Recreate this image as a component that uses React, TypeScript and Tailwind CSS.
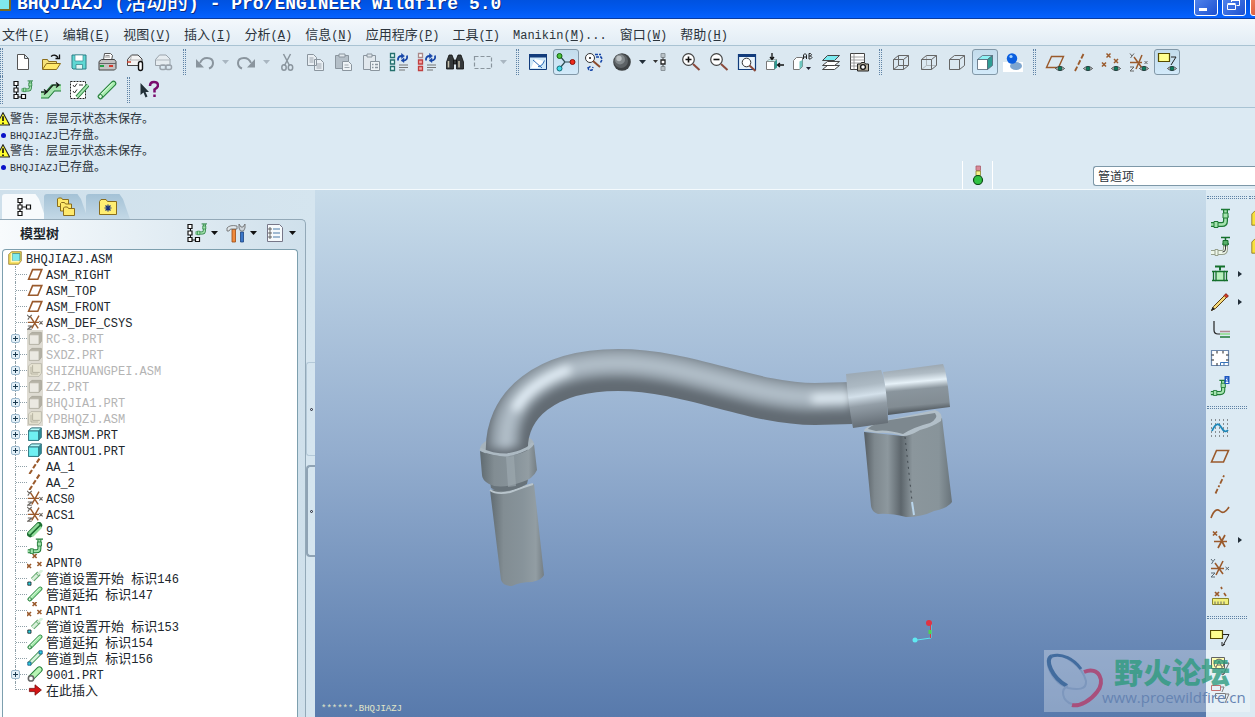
import { useState } from "react";
import type { ReactNode } from "react";

const BROWN = "#9a5a2c";
const EYE = (
  <g>
    <path d="M10.500 16.500q4.500-4 9 0q-4.500 4-9 0z" fill="#fff" stroke="#333" strokeWidth=".9" />
    <circle cx="15" cy="16.500" r="2.200" fill="#0f7a5a" stroke="#223" strokeWidth=".5" />
  </g>
);

const PIPE = (
  <g fill="none">
    <path d="M1 16.500h11q3.500 0 3.500-3.500V2" stroke="#1d7a35" strokeWidth="5" />
    <path d="M1 16.500h11q3.500 0 3.500-3.500V2" stroke="#a4e3ae" strokeWidth="2.500" />
    <path d="M11 1.500h9M13 8.500h5.500M5.500 13.500v6" stroke="#1d7a35" strokeWidth="1.500" />
    <path d="M13 5h5v5h-5zM4 13.500h4v6H4z" fill="#a4e3ae" stroke="#1d7a35" />
  </g>
);

const TREE_BOXES = (
  <g fill="#fff" stroke="#111">
    <path d="M3.500 3v14h7" fill="none" />
    <path d="M1 1.500h4v4H1zM1 8h4v4H1zM1 14.500h4v4H1zM8.500 14.500h4v4h-4z" strokeWidth="1.200" />
  </g>
);

const SYNC = (
  <g fill="none" stroke="#1746a8" strokeWidth="1.800">
    <path d="M9 8.500q-.5-4.500 4-4.500M18 3.500q1 5-4 5" />
    <path d="M12.500 1.500l3 2.500-3 2.500zM15 6l-3 2.500 3 2z" fill="#1746a8" strokeWidth=".5" />
  </g>
);

const LINES3 = <path d="M10 13h9M10 15.500h9M10 18h6" stroke="#777" />;

const ICONS: Record<string, ReactNode> = {
  newFile: <path d="M4.500 2.500h7l4 4v11h-11zM11.500 2.500v4h4" fill="#fff" stroke="#555" />,
  open: (
    <g>
      <path d="M1.500 17V7.500h5l1 2h8V12" fill="#f5e27a" stroke="#8a6d1c" />
      <path d="M1.500 17.500l4-6h14l-4 6z" fill="#ffe96b" stroke="#8a6d1c" />
      <path d="M10 4.500q4-3 7 1M18.500 2.500v4h-4" fill="none" stroke="#111" strokeWidth="1.300" />
    </g>
  ),
  save: (
    <g>
      <path d="M3 3h14v14H4l-1-1z" fill="#5fd8d4" stroke="#2d7d84" />
      <path d="M6 3h8v6H6z" fill="#fff" stroke="#3c8d92" strokeWidth=".7" />
      <path d="M7 12.500h6.500V17H7z" fill="#e4f5f4" stroke="#2d7d84" strokeWidth=".7" />
    </g>
  ),
  print: (
    <g>
      <path d="M6.500 8l1-6.500h6l2 2-1 5z" fill="#fff" stroke="#555" />
      <path d="M2 9.500l2.500-2h13l1.500 2v7l-1.500 1.500H2z" fill="#c3c3c3" stroke="#444" />
      <path d="M2 11.500h17" stroke="#666" />
      <path d="M8 5h5M8.500 3.500h4" stroke="#666" strokeWidth=".7" />
      <path d="M3 13h4v2H3z" fill="#24a148" />
      <path d="M12 13h4v2h-4z" fill="#d33a2c" />
    </g>
  ),
  mail: (
    <g>
      <path d="M2.500 13.500v-6l4-4.500h6.500l4 4v6.500z" fill="#f4f4f4" stroke="#444" />
      <path d="M3 8h13.500M6.500 3L5.500 8" stroke="#999" strokeWidth=".7" />
      <path d="M2 10h4" stroke="#c8402c" strokeWidth="1.500" />
      <rect x="13.500" y="9.500" width="4" height="9" rx="2" fill="#fff" stroke="#111" strokeWidth="1.400" />
    </g>
  ),
  mailLink: (
    <g stroke="#9aa3ab">
      <path d="M2.500 13.500v-6l4-4.500h6.500l4 4v6.500z" fill="#e6ecf0" />
      <path d="M3 8h13.500" strokeWidth=".7" />
      <rect x="7" y="13" width="6" height="4.500" rx="2" fill="none" strokeWidth="1.500" />
      <rect x="12.500" y="13" width="6" height="4.500" rx="2" fill="none" strokeWidth="1.500" />
    </g>
  ),
  undo: (
    <g>
      <path d="M5 11q2-5 7-5 6 0 6 5 0 4-4 5.500" fill="none" stroke="#8a959e" strokeWidth="2" />
      <path d="M1 7v8.500h8z" fill="#8a959e" />
    </g>
  ),
  redo: (
    <g>
      <path d="M15 11q-2-5-7-5-6 0-6 5 0 4 4 5.500" fill="none" stroke="#8a959e" strokeWidth="2" />
      <path d="M19 7v8.500h-8z" fill="#8a959e" />
    </g>
  ),
  cut: (
    <g fill="none" stroke="#8a959e" strokeWidth="1.500">
      <path d="M6.500 2l6 11.500M13.500 2l-6 11.500" />
      <ellipse cx="7" cy="15.500" rx="2.200" ry="2.800" />
      <ellipse cx="13.500" cy="15.500" rx="2.200" ry="2.800" />
    </g>
  ),
  copy: (
    <g fill="#e9eff4" stroke="#8a959e">
      <path d="M2.500 2.500h6l3 3v8h-9zM9.500 7.500h6l3 3v8h-9z" />
      <path d="M4.500 6h4M4.500 8h4M4.500 10h4M11.500 12h5M11.500 14h5M11.500 16h5" strokeWidth=".8" />
    </g>
  ),
  paste: (
    <g stroke="#8a959e">
      <path d="M2.500 3.500h13v13h-13z" fill="#b4bfc8" />
      <path d="M6 2h6v3H6z" fill="#e1e8ed" />
      <path d="M9.500 9.500h6l3 3v6h-9z" fill="#eef3f6" />
      <path d="M11.500 13h4M11.500 15.500h5" strokeWidth=".8" />
    </g>
  ),
  pasteSpecial: (
    <g stroke="#8a959e">
      <path d="M2.500 3.500h12v14h-12z" fill="#e1e8ed" />
      <path d="M6 2h5v3H6z" fill="#e1e8ed" />
      <path d="M9.500 9.500h9v9h-9z" fill="#eef3f6" />
      <path d="M11 12.500h1.500M14 12.500h3M11 15.500h1.500M14 15.500h3" strokeWidth="1.300" />
    </g>
  ),
  regen: (
    <g>
      <path d="M1.500 1.500h4v4h-4zM1.500 8h4v4h-4zM1.500 14.500h4v4h-4z" fill="#e6fbfa" stroke="#25706e" strokeWidth="1.300" />
      {SYNC}
      {LINES3}
    </g>
  ),
  regenRed: (
    <g>
      <path d="M1.500 1.500h4v4h-4z" fill="#fff" stroke="#a88" strokeWidth="1.300" />
      <path d="M1.500 8h4v4h-4zM1.500 14.500h4v4h-4z" fill="#f7a4a4" stroke="#c04040" strokeWidth="1.300" />
      {SYNC}
      {LINES3}
    </g>
  ),
  find: (
    <g fill="#34383a" stroke="#111" strokeWidth=".8">
      <path d="M4 3h3l1.500 4v10H1.500v-7zM16 3h-3l-1.500 4v10h7v-7zM8.500 8h3v4h-3z" />
      <path d="M3.500 9v6.500M14 9v6.500" stroke="#c6c0ac" strokeWidth="1.500" />
    </g>
  ),
  select: <path d="M1.500 4.500h17v12h-17z" fill="none" stroke="#8a959e" strokeDasharray="4 2" strokeWidth="1.200" />,
  repaint: (
    <g>
      <path d="M1.500 2.500h17v15h-17z" fill="#cfe8f8" stroke="#123c7c" />
      <path d="M1 2h18v3.500H1z" fill="#123c7c" />
      <path d="M3 16L7 7l9 2-6 7z" fill="#fff" />
      <path d="M10 14.500q4 .5 6.500-6M5 8l9 8" fill="none" stroke="#2b6bb8" />
    </g>
  ),
  spin: (
    <g>
      <path d="M4 4l5 6-5 6M9 10h8" fill="none" stroke="#2a4a50" strokeWidth="1.200" />
      <circle cx="3.500" cy="4" r="2.500" fill="#4cc43c" stroke="#14600f" />
      <circle cx="3.500" cy="16.500" r="2.500" fill="#43dbe8" stroke="#116b78" />
      <circle cx="16.500" cy="10" r="2.500" fill="#ee2b1c" stroke="#8a120a" />
    </g>
  ),
  orient: (
    <g fill="none">
      <circle cx="6" cy="6" r="4.500" fill="#fff" stroke="#333" />
      <circle cx="6" cy="6" r="1" fill="#111" />
      <path d="M9 9l7 6" stroke="#8b4a2b" strokeWidth="2" />
      <path d="M11 2.500h6M12 5h5q2 3-1 6M4 15q0 4 4 3l1-3M4 16l3-2" stroke="#1746a8" strokeDasharray="3 1" strokeWidth="1.500" />
    </g>
  ),
  sphere: (
    <g>
      <circle cx="10" cy="10" r="8.800" fill="#3e4244" />
      <circle cx="9" cy="9" r="7" fill="#5d6265" />
      <circle cx="8" cy="7.500" r="5" fill="#83898c" />
      <circle cx="7" cy="6.500" r="2.700" fill="#babfc1" />
    </g>
  ),
  explode: (
    <g>
      <path d="M0 8h5l-2.500 3z" fill="#333" />
      <path d="M8 1.500h4v4H8zM8 14.500h4v4H8z" fill="#b9c1c6" stroke="#8b959b" />
      <path d="M8 8h4v4H8z" fill="#fff" stroke="#222" strokeWidth="1.300" />
      <path d="M10 5.500V8M10 12v2.500" stroke="#444" />
    </g>
  ),
  zoomIn: (
    <g fill="none">
      <circle cx="7.500" cy="7.500" r="5.800" fill="#fff" stroke="#444" strokeWidth="1.200" />
      <path d="M4.500 7.500h6M7.500 4.500v6" stroke="#111" strokeWidth="1.600" />
      <path d="M12 12l6.500 6" stroke="#8b4a3b" strokeWidth="2" />
    </g>
  ),
  zoomOut: (
    <g fill="none">
      <circle cx="7.500" cy="7.500" r="5.800" fill="#fff" stroke="#444" strokeWidth="1.200" />
      <path d="M4.500 7.500h6" stroke="#111" strokeWidth="1.600" />
      <path d="M12 12l6.500 6" stroke="#8b4a3b" strokeWidth="2" />
    </g>
  ),
  refit: (
    <g>
      <path d="M1.500 2.500h17v15h-17z" fill="#e8f3fb" stroke="#123c7c" strokeWidth="1.200" />
      <path d="M1 2h18v3H1z" fill="#123c7c" />
      <circle cx="9.500" cy="10.500" r="4.300" fill="#fff" stroke="#333" />
      <path d="M12.500 13.500l6 5.500" stroke="#8b4a3b" strokeWidth="2" />
    </g>
  ),
  reorient: (
    <g>
      <path d="M1.500 9.500h8v8h-8z" fill="#fff" stroke="#777" />
      <path d="M9.500 9.500l2.500-2v8l-2.500 2z" fill="#2f9d94" />
      <path d="M1.500 9.500L4 7.500h8l-2.500 2z" fill="#c5efee" stroke="#777" strokeWidth=".5" />
      <path d="M7 1v6M5 5l2 2.500L9 5M19 13h-6M15 11l-2.500 2 2.500 2" fill="none" stroke="#111" strokeWidth="1.300" />
    </g>
  ),
  saved: (
    <g>
      <path d="M.5 8.500l3-3h6v9l-3 3h-6z" fill="#fff" stroke="#777" />
      <path d="M9.500 8v6l-3 3.500v-8z" fill="#6cc5c0" />
      <path d="M10.500 7V3q1.500-3 3 0v4M10.500 5h3M16 1.500V7h1.500q3-1.500 0-3 2-1.500 0-2.500zM16 4h1.500" fill="none" stroke="#222" />
      <path d="M13 15h5l-2.500 3z" fill="#223" />
    </g>
  ),
  layers: (
    <g stroke="#444">
      <path d="M1.500 17.500l5-4h12l-5 4z" fill="#fff" />
      <path d="M1.500 13.500l5-4h12l-5 4z" fill="#fff" />
      <path d="M1.500 8.500l5-5h12l-5 5z" fill="#7ceaf0" />
    </g>
  ),
  viewMgr: (
    <g>
      <path d="M1.500 1.500h14v16h-14z" fill="#fff" stroke="#444" />
      <path d="M1.500 5h14M1.500 8h14M1.500 11h14M1.500 14h14M5 1.500v16" stroke="#888" strokeWidth=".8" />
      <path d="M8.500 12h3l1-1.500h3l1 1.500h3v7h-11z" fill="#b9b2a0" stroke="#222" />
      <circle cx="14" cy="15" r="2.400" fill="#fff" stroke="#111" strokeWidth="1.300" />
    </g>
  ),
  wireframe: (
    <g fill="none" stroke="#666">
      <path d="M2.500 7.500h10v10h-10zM7.500 3.500h10v10h-10zM2.500 7.500l5-4M12.500 7.500l5-4M2.500 17.500l5-4M12.500 17.500l5-4" />
    </g>
  ),
  hiddenLine: (
    <g fill="none" stroke="#666">
      <path d="M7.500 3.500v10h10M2.500 17.500l5-4" stroke="#b0b7bc" />
      <path d="M2.500 7.500h10v10h-10zM2.500 7.500l5-4h10l-5 4M17.500 3.500v10l-5 4" />
    </g>
  ),
  noHidden: (
    <g fill="none" stroke="#666">
      <path d="M2.500 7.500h10v10h-10zM2.500 7.500l5-4h10l-5 4M17.500 3.500v10l-5 4" />
    </g>
  ),
  shaded: (
    <g stroke="#567" strokeWidth=".8">
      <path d="M2.500 7.500h10v10h-10z" fill="#fff" />
      <path d="M2.500 7.500l5-4h10l-5 4z" fill="#8ef1f4" />
      <path d="M12.500 7.500l5-4v10l-5 4z" fill="#2f9d94" />
    </g>
  ),
  realtime: (
    <g>
      <path d="M0 10h20v10H0z" fill="#fff" />
      <ellipse cx="13" cy="14" rx="6" ry="4" fill="#7ea6cf" />
      <circle cx="9" cy="6.500" r="5.200" fill="#0b5fe0" />
      <circle cx="8" cy="4.500" r="1.600" fill="#a5d4ff" />
    </g>
  ),
  planeEye: (
    <g>
      <path d="M1.500 15.500l5-11h12l-5 11z" fill="none" stroke={BROWN} strokeWidth="1.400" />
      {EYE}
    </g>
  ),
  axisEye: (
    <g>
      <path d="M2 19L11 1" stroke={BROWN} strokeWidth="1.800" strokeDasharray="5 2" />
      {EYE}
    </g>
  ),
  pointEye: (
    <g>
      <path d="M5.500 1.500l4 4m0-4l-4 4M1 10.500l4 4m0-4l-4 4M13 7l4 4m0-4l-4 4" stroke={BROWN} strokeWidth="1.500" />
      {EYE}
    </g>
  ),
  csysEye: (
    <g>
      <path d="M1 10.500h12M5 5l8 11M13 3L7 17" stroke={BROWN} strokeWidth="1.500" />
      <path d="M1 1.500l2 2.500 2-2.500M3 4L1.500 6M1 15h4l-4 4h4M15.500 9l3 3m0-3l-3 3" fill="none" stroke="#666" />
      {EYE}
    </g>
  ),
  noteEye: (
    <g>
      <path d="M1.500 1.500h11v8h-11z" fill="#ffff8e" stroke="#554a00" strokeWidth="1.200" />
      <path d="M14 5h5l-5 8" fill="none" stroke="#222" />
      {EYE}
    </g>
  ),
  treePipe: (
    <g>
      {TREE_BOXES}
      <g transform="translate(8 0) scale(.6)">{PIPE}</g>
    </g>
  ),
  route: (
    <g fill="none">
      <path d="M0 15h6l6-7h8" stroke="#1d7a35" strokeWidth="7" />
      <path d="M0 15h6l6-7h8" stroke="#a4e3ae" strokeWidth="5" />
      <path d="M0 12h6l6-7h6M3 9.500L6 12l-3 2.500M15 2.500L18 5l-3 2.500" stroke="#111" strokeWidth="1.200" />
    </g>
  ),
  spec: (
    <g fill="none">
      <path d="M1.500 1.500h15v17h-15z" fill="#fff" stroke="#222" strokeDasharray="2 1" />
      <path d="M4 5l1.500 2L8 3.500M4 11l1.500 2L8 9.500M10 5h4" stroke="#333" />
      <path d="M8 17l11-12" stroke="#1d7a35" strokeWidth="4" />
      <path d="M8 17l11-12" stroke="#a4e3ae" strokeWidth="2" />
    </g>
  ),
  rod: (
    <g strokeLinecap="round">
      <path d="M3.500 16.500l13-13" stroke="#23803a" strokeWidth="5.500" />
      <path d="M3.500 16.500l13-13" stroke="#a7ecae" strokeWidth="3.500" />
      <path d="M3.500 15l11.500-11.500" stroke="#eaffea" strokeWidth="1" />
      <circle cx="3.500" cy="16.500" r="2" fill="#dff5df" stroke="#23803a" />
    </g>
  ),
  whatsThis: (
    <g>
      <path d="M1.500 3v12l3-2.500 2 5 2-1-2-4.500H10z" fill="#223038" />
      <path d="M11 6q0-4 4-4t4 3.500q0 2-3.500 4v3M15.500 14.500v2.500" fill="none" stroke="#7a0c6e" strokeWidth="2.500" />
    </g>
  ),
  pipe: PIPE,
  flexPipe: (
    <g fill="none">
      <path d="M1 16.500h11q3.500 0 3.500-3.500V9" stroke="#96a08c" strokeWidth="5" />
      <path d="M1 16.500h11q3.500 0 3.500-3.500V9" stroke="#eef7ea" strokeWidth="3" />
      <path d="M11 1.500h9M15.500 1v10M12.500 8h6.500" stroke="#14702c" strokeWidth="1.500" />
      <path d="M13 4.500h5V9h-5z" fill="#58b06a" stroke="#14702c" />
      <path d="M15.500 9v4q0 3-3 3" stroke="#333" />
      <path d="M5 13.500h3v6H5z" fill="#eef7ea" stroke="#96a08c" />
    </g>
  ),
  valve: (
    <g stroke="#14702c" strokeWidth="1.300">
      <path d="M5 2.500h10M10 2.500v4" strokeWidth="2" />
      <path d="M6 7.500h8v9H6z" fill="#b9f0bd" />
      <path d="M3.500 7v10M16.500 7v10M2 7.500h4M2 16.500h4M14 7.500h4M14 16.500h4" fill="none" />
    </g>
  ),
  pencil: (
    <g>
      <path d="M1.500 18.500l2-4L16 2l2 2L5.500 16.500z" fill="#f5d97a" stroke="#5a3d10" />
      <path d="M16 1.500l2.500 2.500-2 2L14 3.500z" fill="#d23c28" stroke="#6a1a10" strokeWidth=".6" />
      <path d="M1 19l1.500-4L5 17z" fill="#222" />
    </g>
  ),
  bend: (
    <g fill="none">
      <path d="M4 1v9q0 4 4 4h2" stroke="#222" strokeWidth="1.200" />
      <path d="M10 11.500h10" stroke="#b08a92" strokeWidth="1.500" />
      <path d="M10 14h10" stroke="#9fe0a4" strokeWidth="2" />
      <path d="M10 17h10" stroke="#1d7a35" strokeWidth="1.500" />
    </g>
  ),
  sheet: (
    <g fill="none">
      <path d="M1.500 2.500h17v15h-17z" fill="#fff" stroke="#6a87ad" strokeWidth="1.200" />
      <path d="M7 3v2.500M13 3v2.500M1.500 7H4M1.500 12H4M18.500 7H16M18.500 12H16M7 17.500V15" stroke="#222" />
      <path d="M10.500 14.500h8M10.500 14.500v3M14 14.500v3" stroke="#3673b8" />
    </g>
  ),
  pipeInfo: (
    <g>
      <g transform="translate(0 3) scale(.85)">{PIPE}</g>
      <path d="M14.500 0h5v8h-5z" fill="#1c56c0" />
      <path d="M17 1.500v1M16 3.500h1v3M15.800 6.500h2.500" stroke="#fff" fill="none" />
    </g>
  ),
  sketch: (
    <g fill="none">
      <path d="M1 2h19M1 6h19M1 10h19M1 14h19M1 18h19" stroke="#333" strokeDasharray="1 3" />
      <path d="M2 13q5-11 9-4t7 3" stroke="#1c86b8" strokeWidth="1.800" />
    </g>
  ),
  plane: <path d="M1.500 16l5-11.500h12l-5 11.500z" fill="none" stroke={BROWN} strokeWidth="1.600" />,
  planeItem: <path d="M2 16.500L7 4.500h11.500l-5 12z" fill="none" stroke={BROWN} strokeWidth="2" />,
  axis: <path d="M5.500 19.500L14.500.5" stroke={BROWN} strokeWidth="1.800" strokeDasharray="5 2 2 2" />,
  axisItem: <path d="M3 20L16 0" stroke={BROWN} strokeWidth="2.600" strokeDasharray="6 2.500" />,
  curve: <path d="M1 16q4-11 9-7 4 4 9-4" fill="none" stroke={BROWN} strokeWidth="1.600" />,
  pointCsys: (
    <g stroke={BROWN} strokeWidth="1.700">
      <path d="M3 1.500l4 4m0-4l-4 4M4 11.500h13M9 6l6 11M15 5L8 18" />
    </g>
  ),
  csys: (
    <g fill="none">
      <path d="M1 10.500h13M5 5l8 11M13 3L6 17" stroke={BROWN} strokeWidth="1.600" />
      <path d="M1 1l2 2.500L5 1M3 3.500L1.500 6M1 15h4l-4 4h4M15.500 9l3.500 3m0-3l-3.500 3" stroke="#5c6a74" />
    </g>
  ),
  csysItem: (
    <g fill="none">
      <path d="M1 10.500h14M4 3l10 15M15 2L6 18" stroke={BROWN} strokeWidth="1.800" />
      <path d="M0 1l3 3 3-3M3 4L1 7M1 15h5l-5 4h5M15.500 9l4 4m0-4l-4 4" stroke="#6b6660" strokeWidth="1.400" />
    </g>
  ),
  points: <path d="M7 0l5 5m0-5l-5 5M0 12.500l5 5m0-5l-5 5M13 10l5 5m0-5l-5 5" stroke={BROWN} strokeWidth="2" />,
  analysis: (
    <g fill="none">
      <path d="M5 6l4 4m0-4l-4 4M11 1l1 2M14 7l2 3" stroke={BROWN} strokeWidth="1.700" />
      <path d="M2.500 12.500h16v6h-16z" fill="#f1f07c" stroke="#8a862c" />
      <path d="M5 18.500v-3M8 18.500v-3M11 18.500v-3M14 18.500v-3" stroke="#666" />
    </g>
  ),
  note: (
    <g>
      <path d="M.5 2.500h12v8h-12z" fill="#ffff8e" stroke="#554a00" strokeWidth="1.200" />
      <path d="M13 6.500h6l-6 11M12 14v4l3-2" fill="none" stroke="#222" />
    </g>
  ),
  balloon: (
    <g fill="none" stroke="#222">
      <path d="M1.500 1.500h13v11h-13z" fill="#ffff8e" />
      <circle cx="9" cy="8" r="4.800" />
      <path d="M6 11l3-6 3 6M7 9h4M14 7h5l-6 12M12 15v4l3-2" />
    </g>
  ),
  noteStack: (
    <g fill="none" stroke="#444">
      <path d="M1.500 1.500h9v5h-9z" stroke="#a33" />
      <path d="M5.500 9.500h10v5h-10zM11 3h3l-2 5M16 10h3l-4 9" />
    </g>
  ),
  tree: (
    <g fill="#fff" stroke="#111" strokeWidth="1.200">
      <path d="M6 5v10M6 10h8" />
      <path d="M4 1.500h4v4H4zM4 8h4v4H4zM4 14.500h4v4H4zM12.500 8h4v4h-4z" />
    </g>
  ),
  folders: (
    <g fill="#ffe96b" stroke="#8a6d1c">
      <path d="M1.500 9.500V2l1-1h3l1 1.500h6v7z" />
      <path d="M4.500 14V6.500l1-1h3l1 1.500h6v7z" />
      <path d="M7.500 18.500V11l1-1h3l1 1.500h6v7z" />
    </g>
  ),
  favorites: (
    <g>
      <path d="M1.500 17.500V4.500l1.500-2h5l1.500 2h9v13z" fill="#ffee72" stroke="#8a6d1c" />
      <path d="M10 7.500v7M6.500 11h7M7.500 8.500l5 5M12.500 8.500l-5 5" stroke="#17307c" strokeWidth="1.200" />
    </g>
  ),
  tools: (
    <g>
      <path d="M6 6h3.500v13H6z" fill="#f08a3c" stroke="#9b4a12" strokeWidth=".8" />
      <path d="M1 5q3-3.500 10-2v3H4.500L3 8H1z" fill="#dfe6ea" stroke="#666" strokeWidth=".8" />
      <path d="M14.500 9h3v10h-3z" fill="#3a76c8" stroke="#1a4280" strokeWidth=".8" />
      <path d="M13 1v4l1.500 3h3L19 5V1l-2 3h-2z" fill="#ccd4da" stroke="#666" strokeWidth=".8" />
    </g>
  ),
  settings: (
    <g>
      <path d="M2.500 1.500h12l3 3v14h-15z" fill="#f6fafc" stroke="#778" />
      <path d="M8 6h7M8 10h7M8 14h7" stroke="#4b7ba8" />
      <path d="M4 5h2v2H4zM4 9h2v2H4zM4 13h2v2H4z" fill="#fff" stroke="#444" strokeWidth=".8" />
    </g>
  ),
  assembly: (
    <g>
      <path d="M1 5l4-4h14v13l-4 5H1z" fill="#f3dd58" stroke="#86691a" />
      <path d="M6 3.500h11v9l-2 2H6z" fill="#7fe9ec" stroke="#2d7d84" />
      <path d="M5 3v12h11" fill="none" stroke="#fff8b8" strokeWidth="2" />
    </g>
  ),
  component: <path d="M1 5l4-4h14v13l-4 5H1z" fill="#f8e23c" stroke="#86691a" />,
  part: (
    <g>
      <path d="M2 6l3.500-3.500H18V14l-3.500 4H2z" fill="#2f8d98" stroke="#2b6b76" />
      <path d="M2 6h12.500v12H2z" fill="#6ff0f2" stroke="#2b6b76" />
      <path d="M2 6l3.500-3.500H18L14.500 6z" fill="#b5fafa" stroke="#2b6b76" />
    </g>
  ),
  partOff: (
    <g>
      <path d="M0 0h20v20H0z" fill="#dedbd2" />
      <path d="M3 6l3-3h12v11l-3 4H3z" fill="#b5b2a6" stroke="#a5a296" />
      <path d="M3 6h12v12H3z" fill="#ebe9e2" stroke="#b5b2a6" />
    </g>
  ),
  assemblyOff: (
    <g>
      <path d="M0 0h20v20H0z" fill="#dedbd2" />
      <path d="M2 5l3-3h13v12l-3 4H2z" fill="#e6e3d2" stroke="#b5b2a6" />
      <path d="M7 4v9h9M5 6v9h9" fill="none" stroke="#aaa796" />
    </g>
  ),
  bundle: (
    <g strokeLinecap="round">
      <path d="M4 15L15 4" stroke="#1d6f32" strokeWidth="8" />
      <path d="M3 14L14 3M7 17L17 7" stroke="#8fdc9a" strokeWidth="3" />
      <path d="M5 16L16 5" stroke="#1d6f32" />
    </g>
  ),
  pipeStart: (
    <g>
      <path d="M7 12l8-8" stroke="#64a86e" strokeWidth="6" />
      <path d="M7 12l12-12" stroke="#d8f0da" strokeWidth="3.500" strokeDasharray="8 1 2 1" />
      <path d="M1 15h4v4H1z" fill="#2fd5e6" stroke="#111" />
    </g>
  ),
  pipeToPoint: (
    <g>
      <path d="M3.500 16.500l13-13" stroke="#23803a" strokeWidth="5.500" />
      <path d="M3.500 16.500l13-13" stroke="#d4f4dc" strokeWidth="3.500" />
      <path d="M1 15h4v4H1zM15 1h4v4h-4z" fill="#2fd5e6" stroke="#114a78" />
    </g>
  ),
  pipePart: (
    <g strokeLinecap="round">
      <path d="M5.500 14.500l10-10" stroke="#23803a" strokeWidth="8" />
      <path d="M5.500 14.500l10-10" stroke="#b9f5b4" strokeWidth="5.500" />
      <circle cx="5" cy="15.500" r="3.300" fill="#fff" stroke="#666" strokeWidth="2" />
    </g>
  ),
  insertHere: <path d="M3 8h7V3.500l8 6.500-8 6.500V12H3z" fill="#d41414" stroke="#7a0a0a" />,
  warning: (
    <g>
      <path d="M10 1l9.500 17.500H.5z" fill="#ffff2e" stroke="#222" strokeWidth="1.500" />
      <path d="M10 6v7M10 15v2" stroke="#111" strokeWidth="2.400" />
    </g>
  ),
  statusLight: (
    <g>
      <path d="M8 1h4.500v4.500H8z" fill="#d98a98" stroke="#a85a68" strokeWidth=".8" />
      <path d="M8 6h4.500v4.500H8z" fill="#f5f08a" stroke="#8a862c" strokeWidth=".8" />
      <circle cx="10" cy="15" r="4.500" fill="#2fc244" stroke="#0d4a18" strokeWidth="1.200" />
    </g>
  ),
};

function Icon({ name, className = "h-5 w-5" }: { name: string; className?: string }) {
  return (
    <svg viewBox="0 0 20 20" className={`${className} shrink-0`} aria-hidden="true">
      {ICONS[name]}
    </svg>
  );
}

// Latin characters are set in a monospaced face, Chinese ones in Noto CJK
function Label({ text, small = false }: { text: string; small?: boolean }) {
  return (
    <span className="whitespace-pre">
      {text.split(/([^\x00-\x7f]+)/).map((part, i) => (
        <span
          key={i}
          className={
            i % 2
              ? small
                ? "font-['Noto_Sans_CJK_SC',sans-serif] text-[12px]"
                : "font-['Noto_Sans_CJK_SC',sans-serif] text-[13px]"
              : small
                ? "font-['Liberation_Mono',monospace] text-[10px]"
                : "font-['Liberation_Mono',monospace] text-[12px]"
          }
        >
          {part}
        </span>
      ))}
    </span>
  );
}

const MENUS = [
  ["文件", "F"],
  ["编辑", "E"],
  ["视图", "V"],
  ["插入", "I"],
  ["分析", "A"],
  ["信息", "N"],
  ["应用程序", "P"],
  ["工具", "T"],
  ["Manikin", "M"],
  ["窗口", "W"],
  ["帮助", "H"],
];

const ROW_ONE =
  "newFile open save print mail mailLink | undo ~ redo ~ cut copy paste pasteSpecial regen regenRed find select ~ | repaint spin* orient sphere v explode zoomIn zoomOut refit reorient saved layers viewMgr | wireframe hiddenLine noHidden shaded* realtime | planeEye axisEye pointEye csysEye noteEye*";
const ROW_TWO = "treePipe route spec rod | whatsThis";

const SIDE_GROUPS = [
  ["pipe", "flexPipe", "valve>", "pencil>", "bend", "sheet", "pipeInfo"],
  ["sketch", "plane", "axis", "curve", "pointCsys>", "csys", "analysis"],
  ["note", "balloon", "noteStack"],
];

const TREE: { icon: string; text: string; plus?: boolean; off?: boolean }[] = [
  { icon: "planeItem", text: "ASM_RIGHT" },
  { icon: "planeItem", text: "ASM_TOP" },
  { icon: "planeItem", text: "ASM_FRONT" },
  { icon: "csysItem", text: "ASM_DEF_CSYS" },
  { icon: "partOff", text: "RC-3.PRT", plus: true, off: true },
  { icon: "partOff", text: "SXDZ.PRT", plus: true, off: true },
  { icon: "assemblyOff", text: "SHIZHUANGPEI.ASM", plus: true, off: true },
  { icon: "partOff", text: "ZZ.PRT", plus: true, off: true },
  { icon: "partOff", text: "BHQJIA1.PRT", plus: true, off: true },
  { icon: "assemblyOff", text: "YPBHQZJ.ASM", plus: true, off: true },
  { icon: "part", text: "KBJMSM.PRT", plus: true },
  { icon: "part", text: "GANTOU1.PRT", plus: true },
  { icon: "axisItem", text: "AA_1" },
  { icon: "axisItem", text: "AA_2" },
  { icon: "csysItem", text: "ACS0" },
  { icon: "csysItem", text: "ACS1" },
  { icon: "bundle", text: "9" },
  { icon: "pipe", text: "9" },
  { icon: "points", text: "APNT0" },
  { icon: "pipeStart", text: "管道设置开始 标识146" },
  { icon: "rod", text: "管道延拓 标识147" },
  { icon: "points", text: "APNT1" },
  { icon: "pipeStart", text: "管道设置开始 标识153" },
  { icon: "rod", text: "管道延拓 标识154" },
  { icon: "pipeToPoint", text: "管道到点 标识156" },
  { icon: "pipePart", text: "9001.PRT", plus: true },
  { icon: "insertHere", text: "在此插入" },
];

function Caret({ className = "fill-[#222e38]" }: { className?: string }) {
  return (
    <svg viewBox="0 0 7 4" className={`h-1 w-[7px] shrink-0 ${className}`} aria-hidden="true">
      <path d="M0 0h7L3.500 4z" />
    </svg>
  );
}

function Grip() {
  return (
    <span className="flex h-7 w-3.5 shrink-0 items-center justify-center">
      <span className="h-[26px] w-[3px] border-x border-dotted border-[#5f83a6]" />
    </span>
  );
}

function ToolRow({ items }: { items: string }) {
  return (
    <div className="flex h-7 items-center">
      <span className="mr-1.5 h-7 w-[3px] border-x border-dotted border-[#5f83a6]" />
      {items.split(" ").map((item, i) => {
        if (item === "|") return <Grip key={i} />;
        if (item === "~" || item === "v")
          return (
            <button key={i} aria-label="更多" className="flex h-7 w-[13px] items-center justify-center">
              <Caret className={item === "v" ? "fill-[#222e38]" : "fill-[#a9b6c1]"} />
            </button>
          );
        const active = item.endsWith("*");
        const name = item.replace("*", "");
        return (
          <button
            key={i}
            aria-label={name}
            className={
              active
                ? "mx-px flex h-[26px] w-[26px] shrink-0 items-center justify-center rounded-[3px] border border-[#8298a8] bg-linear-to-b from-[#c3dcec] to-[#d3eafa]"
                : "flex h-7 w-7 shrink-0 items-center justify-center"
            }
          >
            <Icon name={name} />
          </button>
        );
      })}
    </div>
  );
}

function Toolbars() {
  return (
    <div className="border-b border-[#a9c3d3] bg-[#dbe8f1] pt-0.5 pb-[3px]">
      <ToolRow items={ROW_ONE} />
      <ToolRow items={ROW_TWO} />
    </div>
  );
}

function TitleBar() {
  return (
    <header className="h-[19px] shrink-0 overflow-hidden border-b border-[#0a3ca0] bg-linear-to-b from-[#0052e0] via-[#0058ee] to-[#0662ff]">
      <div className="-mt-[11px] flex h-[30px] items-center justify-between">
        <div className="flex items-center gap-1.5">
          <span className="h-3.5 w-[11px] border-2 border-l-0 border-[#7a6a20] bg-[#7fe9ec]" />
          <h1 className="font-['Liberation_Mono','Noto_Sans_CJK_SC',monospace] text-[18px] leading-[30px] font-bold whitespace-nowrap text-white [text-shadow:1px_1px_#0a2a80]">
            BHQJIAZJ (<span className="text-[21px] font-medium">活动的</span>) - Pro/ENGINEER Wildfire 5.0
          </h1>
        </div>
        <div className="-mr-[19px] flex gap-1">
          <button
            aria-label="最小化"
            className="flex h-6 w-6 items-end rounded-[3px] border border-white bg-linear-to-br from-[#5a8cf0] to-[#1c4fd0] p-1"
          >
            <span className="h-[3px] w-2 bg-white" />
          </button>
          <button
            aria-label="还原"
            className="flex h-6 w-6 items-end rounded-[3px] border border-white bg-linear-to-br from-[#5a8cf0] to-[#1c4fd0] p-1"
          >
            <svg viewBox="0 0 14 12" className="h-3 w-3.5 fill-none stroke-white">
              <path d="M.5 5.500h8v5h-8zM.5 4.500h8M4.500 3V.5h8v6h-3M4.500 1.500h8" />
            </svg>
          </button>
          <button
            aria-label="关闭"
            className="h-6 w-6 rounded-[3px] border border-white bg-linear-to-br from-[#f08a6a] to-[#d0401c]"
          />
        </div>
      </div>
    </header>
  );
}

function MenuBar() {
  return (
    <nav className="flex h-[27px] shrink-0 items-center gap-[13px] border-b border-[#a9c3d3] bg-linear-to-b from-[#f4f8fc] to-[#e2edf5] pt-1 pl-0.5 text-[#2c343c]">
      {MENUS.map(([name, key]) => (
        <button key={key} className="whitespace-nowrap leading-4">
          <Label text={name} />
          <span className="font-['Liberation_Mono',monospace] text-[12px]">
            (<u>{key}</u>){key === "M" && "..."}
          </span>
        </button>
      ))}
    </nav>
  );
}

function Messages() {
  return (
    <section className="flex h-[82px] shrink-0 items-start justify-between border-b border-[#f4fafd] bg-[#dceaf3] text-[#2c343c]">
      <ul className="pt-[3px]">
        {[0, 1, 2, 3].map((i) => (
          <li key={i} className="flex h-4 items-center leading-4">
            {i % 2 ? (
              <span className="mr-1 ml-px h-[5px] w-[5px] rounded-full bg-[#0a12c8]" />
            ) : (
              <Icon name="warning" className="-ml-1 h-3.5 w-3.5" />
            )}
            <Label small text={i % 2 ? "BHQJIAZJ已存盘。" : "警告: 层显示状态未保存。"} />
          </li>
        ))}
      </ul>
      <div className="flex items-end self-end">
        <div className="mr-[100px] flex h-7 w-[31px] items-center justify-center border-x border-white">
          <Icon name="statusLight" />
        </div>
        <select
          aria-label="过滤器"
          className="mb-[3px] h-5 w-[162px] appearance-none rounded-l-[3px] border border-r-0 border-[#7d98a8] bg-white pl-1 font-['Noto_Sans_CJK_SC',sans-serif] text-[12px] leading-4"
        >
          <option>管道项</option>
        </select>
      </div>
    </section>
  );
}

function ModelTree() {
  return (
    <div className="mr-[7px] ml-0.5 min-h-0 flex-1 overflow-hidden rounded-t-[4px] border border-b-0 border-[#7d9fae] bg-white leading-4 text-[#20262c]">
      <div className="flex h-4 items-center gap-1 pl-[5px]">
        <Icon name="assembly" className="h-3.5 w-3.5" />
        <Label text="BHQJIAZJ.ASM" />
      </div>
      <ul>
        {TREE.map((row, i) => (
          <li key={i} className="flex h-4 items-center">
            <span
              className={`ml-3 flex w-3 items-center border-l border-dotted border-[#8fa0a8] ${
                i === TREE.length - 1 ? "h-2 self-start" : "h-4"
              }`}
            >
              {row.plus && (
                <button
                  aria-label="展开"
                  className="-ml-[5px] flex h-[9px] w-[9px] shrink-0 items-center justify-center rounded-[2px] border border-[#9bb8cc] bg-[#e3f0f8]"
                >
                  <svg viewBox="0 0 5 5" className="h-[5px] w-[5px] stroke-[#1a3a50]">
                    <path d="M0 2.500h5M2.500 0v5" />
                  </svg>
                </button>
              )}
              <span
                className={`flex-1 border-t border-dotted border-[#8fa0a8] ${i === TREE.length - 1 ? "self-end" : ""}`}
              />
            </span>
            <Icon name={row.icon} className="mr-[3px] h-4 w-4" />
            <span className={row.off ? "text-[#b4b4b4]" : ""}>
              <Label text={row.text} />
            </span>
          </li>
        ))}
      </ul>
    </div>
  );
}

function LeftPanel() {
  const [tab, setTab] = useState(0);

  return (
    <aside className="flex w-[315px] shrink-0 bg-linear-to-r from-[#cfe0eb] to-[#d5e5ef]">
      <div className="flex w-[306px] flex-col">
        <div className="flex h-[29px] items-end pl-0.5">
          {["tree", "folders", "favorites"].map((name, i) => (
            <button
              key={name}
              aria-label={name}
              onClick={() => setTab(i)}
              className={`-mr-0.5 flex h-[25px] w-11 items-center justify-center rounded-tl-[3px] [clip-path:polygon(0_0,76%_0,84%_20%,100%_100%,0_100%)] ${
                tab === i ? "bg-[#f7fafc]" : "bg-linear-to-b from-[#a4c2d6] to-[#c3d8e6]"
              }`}
            >
              <Icon name={name} />
            </button>
          ))}
        </div>
        <div className="flex min-h-0 flex-1 flex-col rounded-tr-[5px] border-t border-r border-[#93a9b8] bg-linear-to-r from-[#f8fbfd] to-[#cfe0eb]">
          <div className="flex h-[29px] shrink-0 items-center justify-between pr-[9px] pb-1 pl-5">
            <h2 className="font-['Noto_Sans_CJK_SC',sans-serif] text-[13px] leading-4 font-bold text-[#20262c]">模型树</h2>
            <div className="flex gap-2">
              {["treePipe", "tools", "settings"].map((name) => (
                <button key={name} aria-label={name} className="flex items-center gap-1">
                  <Icon name={name} />
                  <Caret className="fill-[#111]" />
                </button>
              ))}
            </div>
          </div>
          <ModelTree />
        </div>
      </div>
      <div className="flex flex-1 flex-col pt-[172px]">
        <div className="flex h-[94px] items-center justify-center rounded-l-[3px] border border-r-0 border-[#b4c9d8]">
          <span className="h-[3px] w-[3px] rounded-full border border-[#223]" />
        </div>
        <div className="mt-[9px] flex h-[92px] items-center justify-center rounded-l-[4px] border-2 border-r-0 border-[#8fa3b4]">
          <span className="h-[3px] w-[3px] rounded-full border border-[#223]" />
        </div>
      </div>
    </aside>
  );
}

const TUBE = "M507 456C503 403 548 370 618 370C690 370 750 404 815 404L852 403";

function PipeModel() {
  return (
    <svg viewBox="315 190 891 527" className="h-full w-full" role="img" aria-label="BHQJIAZJ">
      <defs>
        <linearGradient id="pipe" x1="0" x2="1">
          <stop offset="0" stopColor="#5f6a70" />
          <stop offset=".25" stopColor="#828d93" />
          <stop offset=".6" stopColor="#87939a" />
          <stop offset=".85" stopColor="#929da3" />
          <stop offset="1" stopColor="#747e84" />
        </linearGradient>
        <linearGradient id="collar" x1="0" x2=".1" y1="0" y2="1">
          <stop offset="0" stopColor="#98a5b0" />
          <stop offset=".3" stopColor="#acb9c3" />
          <stop offset=".48" stopColor="#d3e0ea" />
          <stop offset=".65" stopColor="#939ea7" />
          <stop offset="1" stopColor="#666f77" />
        </linearGradient>
        <linearGradient id="stub" x1="0" x2=".12" y1="0" y2="1">
          <stop offset="0" stopColor="#8e99a2" />
          <stop offset=".25" stopColor="#b0bcc5" />
          <stop offset=".4" stopColor="#e6f1f8" />
          <stop offset=".55" stopColor="#8a959d" />
          <stop offset=".85" stopColor="#828c93" />
          <stop offset="1" stopColor="#4d555b" />
        </linearGradient>
        <linearGradient id="lobe" x1="0" x2="1">
          <stop offset="0" stopColor="#545c62" />
          <stop offset=".12" stopColor="#7e888e" />
          <stop offset=".27" stopColor="#8d989e" />
          <stop offset=".42" stopColor="#5d666c" />
          <stop offset=".55" stopColor="#8b969c" />
          <stop offset=".85" stopColor="#88949a" />
          <stop offset="1" stopColor="#68737a" />
        </linearGradient>
        <filter id="soft" x="-10%" y="-20%" width="120%" height="140%">
          <feGaussianBlur stdDeviation="4" />
        </filter>
        <mask id="tube" maskUnits="userSpaceOnUse" x="315" y="190" width="891" height="527">
          <path d={TUBE} fill="none" stroke="#fff" strokeWidth="42" />
        </mask>
      </defs>

      <path d="M490 490L534 484L544 575Q542 580 532 582Q520 582 512 586Q503 586 501 580z" fill="url(#pipe)" />
      <path d="M490 490Q497 495 510 492Q526 486 533 484" fill="none" stroke="#b9c5cc" strokeWidth="2" />
      <path d="M488 470L530 470L527 484Q505 496 491 488z" fill="#68737a" />
      <ellipse cx="507" cy="446" rx="27" ry="11" transform="rotate(-6 507 446)" fill="#a6b3bc" />

      <g mask="url(#tube)">
        <path d={TUBE} fill="none" stroke="#626b73" strokeWidth="44" />
        <g fill="none" filter="url(#soft)">
          <path d={TUBE} transform="translate(-2 -8)" stroke="#98a4ae" strokeWidth="30" />
          <path d={TUBE} transform="translate(-1 -7)" stroke="#b3c0ca" strokeWidth="11" />
          <path d="M515 410Q528 384 570 369" stroke="#e6f2fa" strokeWidth="9" />
          <path d="M812 399L852 398" stroke="#e6f2fa" strokeWidth="8" />
        </g>
      </g>

      <path d="M480 451Q492 457 510 456Q530 452 534 444L537 470Q533 479 522 482Q500 490 489 484Q482 480 482 475z" fill="url(#pipe)" />
      <path d="M480 449Q492 455 507 455Q528 451 533 443" fill="none" stroke="#acb9c2" strokeWidth="3" />
      <path d="M506 457L514 456L516 486L508 487z" fill="#a0abb2" opacity=".6" />

      <path d="M864 432L903 436L942 418L952 502Q948 508 934 511Q922 517 906 517Q890 513 878 514Q872 512 871 506z" fill="url(#lobe)" />
      <path d="M864 431Q864 426 888 420L935 410Q944 413 941 421Q932 427 920 430Q910 436 903 436Q890 432 878 433z" fill="#b2bfc8" />
      <path d="M868 429Q870 425 890 420L935 413Q939 418 930 423Q914 427 903 434Q886 429 876 431z" fill="#7d888f" />
      <path d="M905 437L913 510" stroke="#434b51" strokeDasharray="2 4" />
      <path d="M912 502L914 515" stroke="#b9d5ec" strokeWidth="2" />

      <path d="M883 372L943 364Q947 372 950 407L888 415z" fill="url(#stub)" />
      <path d="M846 374L881 370Q887 384 888 423L853 428Q848 404 846 374z" fill="url(#collar)" />

      <path d="M931 624v14l-14 2" fill="none" stroke="#5ce4ec" />
      <path d="M930.500 625v13" stroke="#d63c48" />
      <path d="M930 630v4" stroke="#4fd54c" strokeWidth="3" />
      <circle cx="929" cy="623" r="3" fill="#e03444" />
      <circle cx="915" cy="640" r="2.500" fill="#5fe9f2" />
    </svg>
  );
}

function Canvas() {
  return (
    <main className="relative min-w-0 flex-1 bg-linear-to-b from-[#c8dcea] via-[#93adce] to-[#587aac]">
      <PipeModel />
      <p className="absolute bottom-0 left-1.5 font-['Liberation_Mono',monospace] text-[9px] leading-4 text-[#e2e6c8]">
        ******.BHQJIAZJ
      </p>
    </main>
  );
}

function SideGrip() {
  return (
    <div className="flex h-3.5 items-center pl-px">
      <span className="h-[3px] w-10 border-y border-dotted border-[#5f83a6]" />
    </div>
  );
}

function SideToolbar() {
  return (
    <aside className="flex w-[49px] shrink-0 overflow-hidden bg-[#dceaf3]">
      <div className="w-[42px] shrink-0">
        {SIDE_GROUPS.map((group, i) => (
          <div key={i}>
            <SideGrip />
            {group.map((item) => (
              <div key={item} className="flex h-7 items-center gap-1">
                <button aria-label={item.replace(">", "")} className="flex h-7 w-7 items-center justify-center">
                  <Icon name={item.replace(">", "")} />
                </button>
                {item.endsWith(">") && (
                  <svg viewBox="0 0 4 6" className="h-1.5 w-1 fill-[#222e38]" aria-hidden="true">
                    <path d="M0 0l4 3-4 3z" />
                  </svg>
                )}
              </div>
            ))}
          </div>
        ))}
      </div>
      <div className="shrink-0">
        <SideGrip />
        <button aria-label="装配" className="flex h-7 items-center pl-[3px]">
          <Icon name="component" className="h-4 w-4" />
        </button>
        <button aria-label="创建" className="flex h-7 items-center pl-[3px]">
          <Icon name="component" className="h-4 w-4" />
        </button>
      </div>
    </aside>
  );
}

function Watermark() {
  return (
    <div className="pointer-events-none absolute right-[5px] bottom-[5px] flex h-[62px] w-[206px] items-center overflow-hidden bg-white/30">
      <svg viewBox="0 0 60 62" className="h-[62px] w-[60px] shrink-0 fill-none" aria-hidden="true">
        <path d="M24 38C8 33-2 10 7 6 17 1 38 15 42 31 43 40 33 40 24 38" stroke="#7d97bd" strokeWidth="2" />
        <path d="M23 36C8 28 0 9 8 6" stroke="#426c9e" strokeWidth="4" />
        <path d="M8 6C18 3 30 9 37 19" stroke="#426c9e" strokeWidth="3" />
        <path d="M28 54C18 51 16 39 24 36" stroke="#7d97bd" strokeWidth="2" />
        <path d="M40 22C55 16 62 31 53 42 47 50 36 57 28 55" stroke="#a8507c" strokeWidth="4" />
      </svg>
      <div className="-ml-0.5 whitespace-nowrap">
        <p className="pl-3 font-['Noto_Sans_CJK_SC',sans-serif] text-[29px] leading-8 font-black text-[#2c9a7c]/80">
          野火论坛
        </p>
        <p className="font-['Open_Sans',sans-serif] text-[15px] leading-5 text-[#6583b2]">www.proewildfire.cn</p>
      </div>
    </div>
  );
}

export default function App() {
  return (
    <div className="relative flex h-screen flex-col overflow-hidden">
      <TitleBar />
      <MenuBar />
      <Toolbars />
      <Messages />
      <div className="flex min-h-0 flex-1">
        <LeftPanel />
        <Canvas />
        <SideToolbar />
      </div>
      <Watermark />
    </div>
  );
}
